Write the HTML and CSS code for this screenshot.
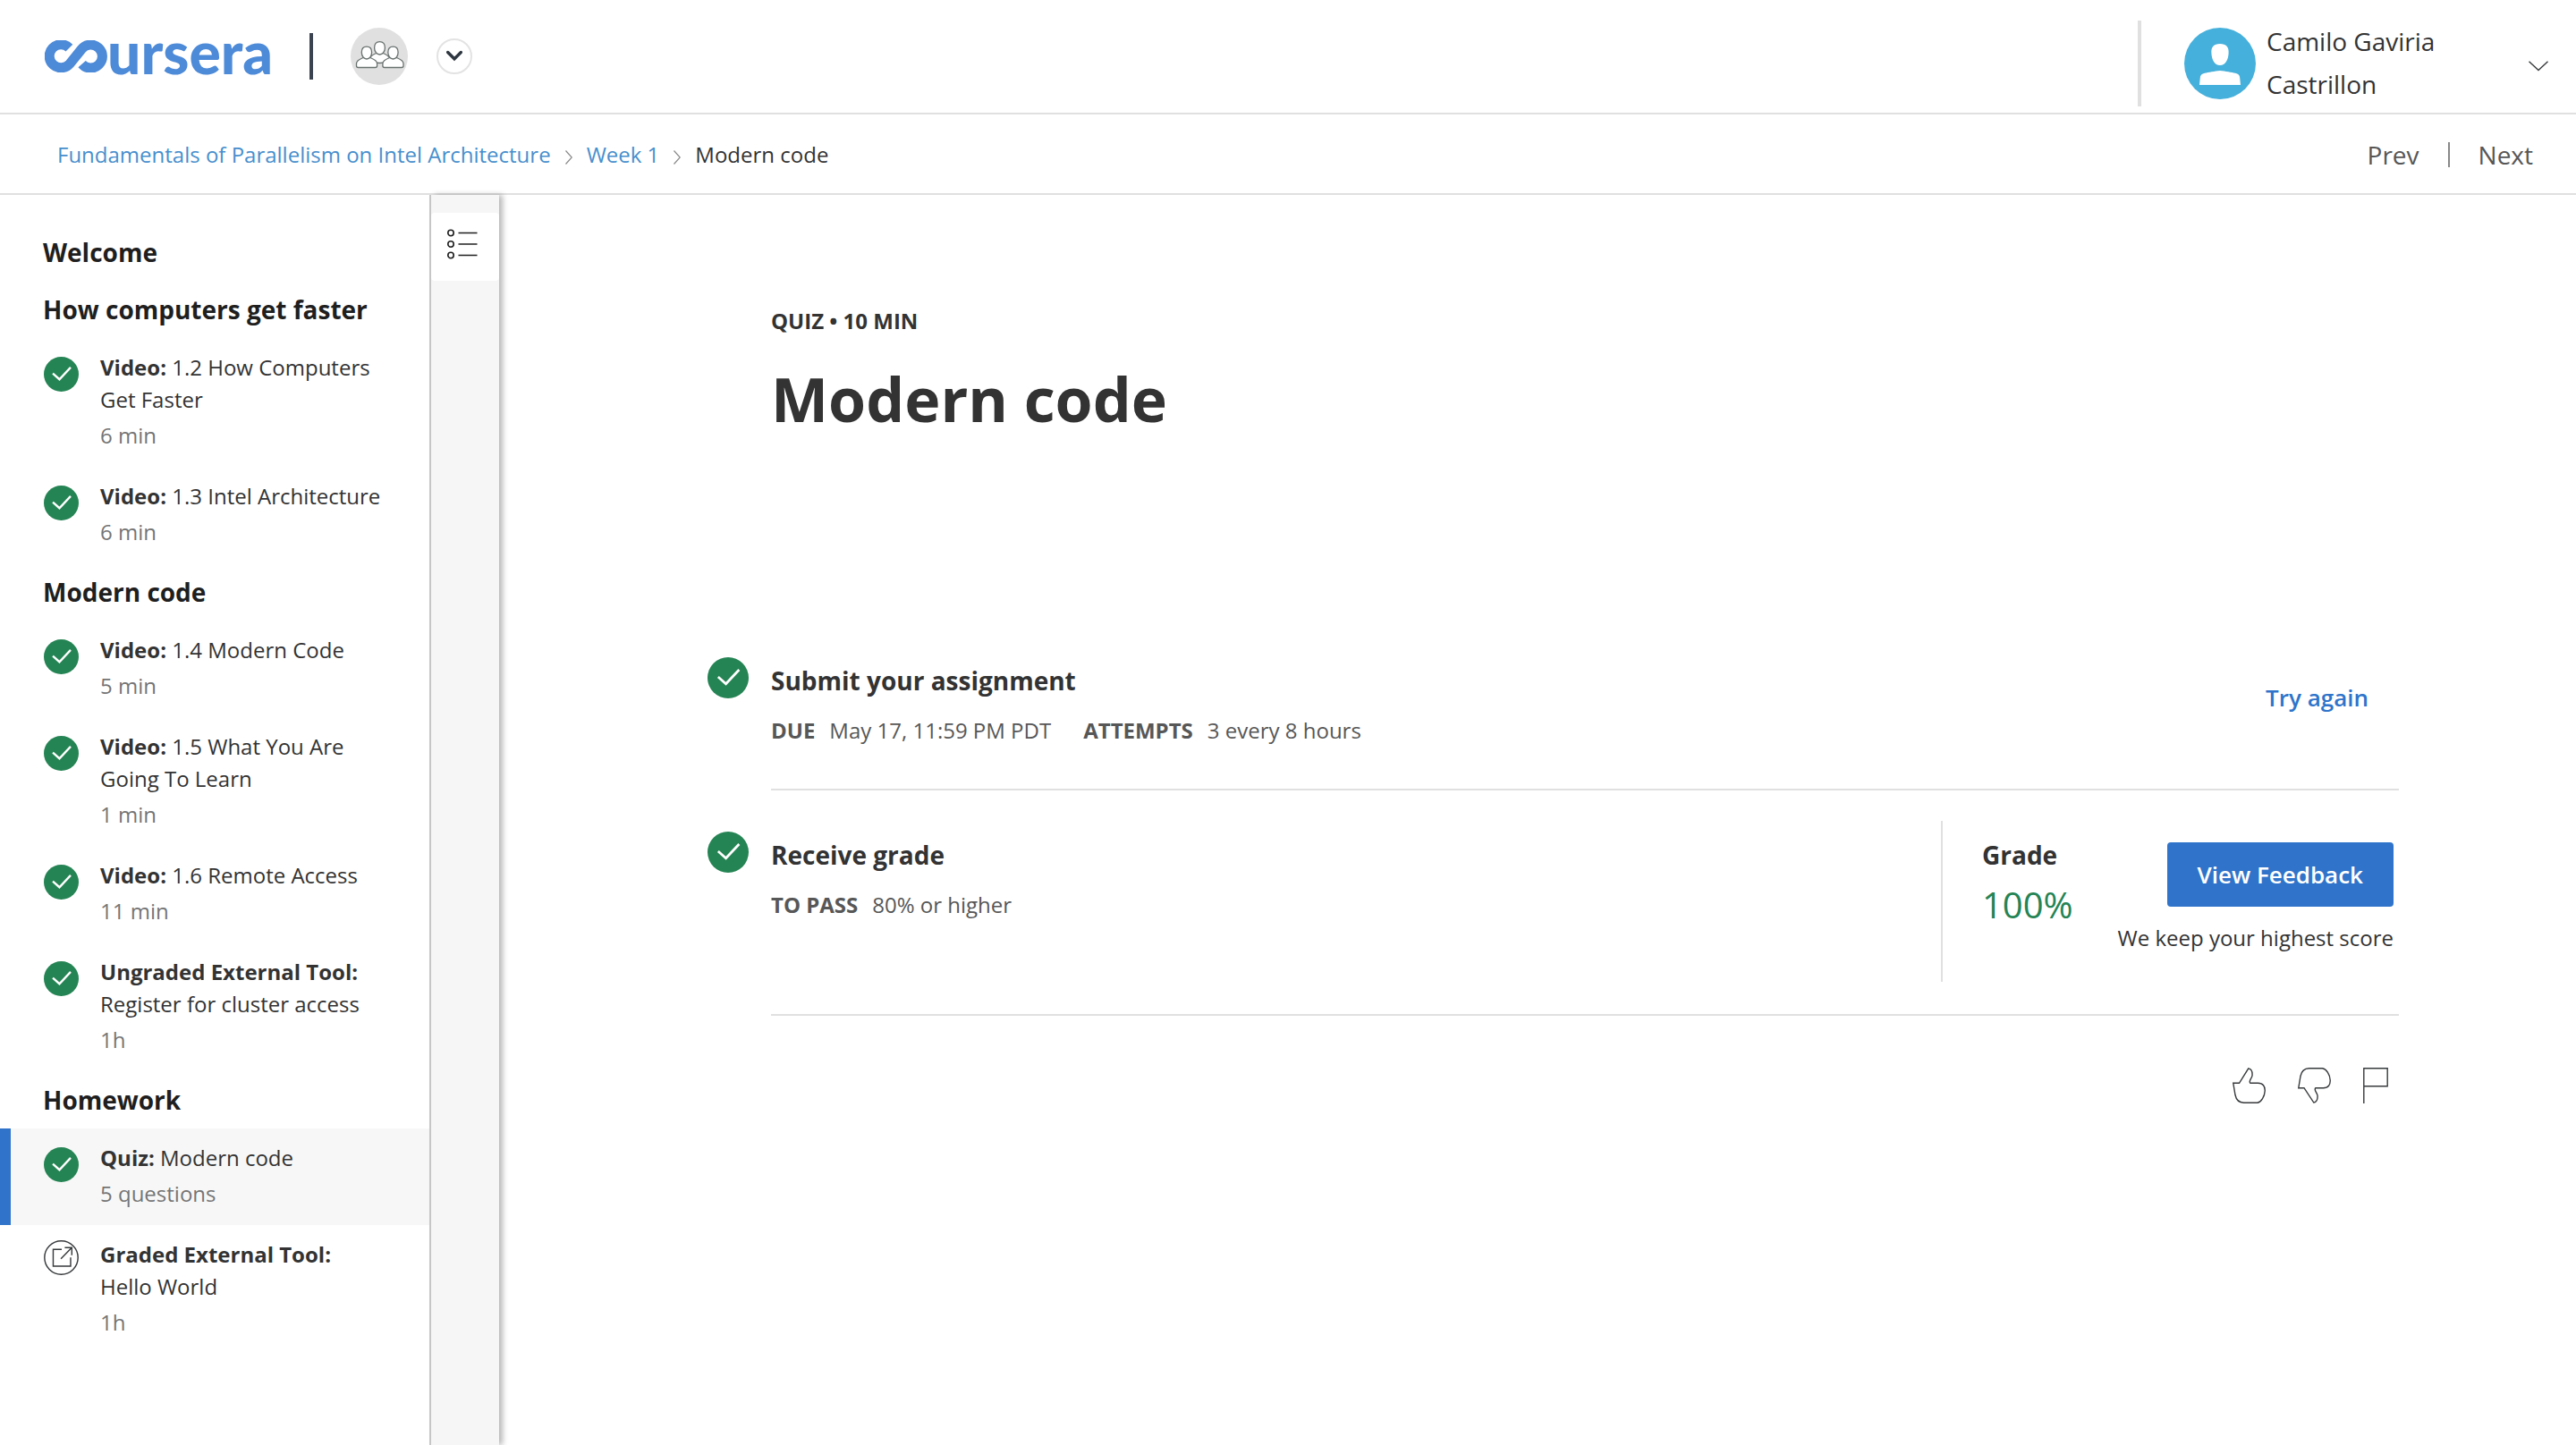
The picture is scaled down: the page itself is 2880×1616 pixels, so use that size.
FILE: index.html
```html
<!DOCTYPE html>
<html lang="en">
<head>
<meta charset="utf-8">
<meta name="viewport" content="width=device-width, initial-scale=1">
<title>Modern code | Coursera</title>
<link rel="stylesheet" href="styles.css">
</head>
<body>
<svg class="symbols" aria-hidden="true">
  <symbol id="icon-done" viewBox="0 0 38 38">
    <circle cx="19" cy="19" r="19" fill="#258454"/>
    <path d="M9.8 18.2 17 24.6 29.2 11.6" fill="none" stroke="#fff" stroke-width="2.3"/>
  </symbol>
  <symbol id="icon-external" viewBox="0 0 38 38">
    <g fill="none" stroke="#373a3c" stroke-width="1.4">
      <circle cx="19" cy="19" r="18.2"/>
      <path d="M19.5 9.9H10.2V28.2H29.2V18.8M18.6 20.2 30.4 8.1M22.8 8H30.5V16.2"/>
    </g>
  </symbol>
</svg>

<header class="top-bar">
  <a class="logo" href="#" aria-label="Coursera">
    <svg class="logo-mark" viewBox="0 0 70 36" aria-hidden="true">
      <path d="M27.4 8.6A13 13 0 1 0 28.1 26.2L41.4 9.8A13 13 0 1 1 41.6 26.6" fill="none" stroke="#4d8ad8" stroke-width="11"/>
    </svg>
    <span class="logo-text">ursera</span>
  </a>
  <span class="logo-divider"></span>
  <span class="group-badge">
    <svg viewBox="0 0 64 64" aria-hidden="true">
      <g fill="#fff" stroke="#68716f" stroke-width="1.3" stroke-linejoin="round">
        <path d="M28.5 28.5Q23.500 30.500 21.500 33.500Q25 39.500 32.500 39.500T43.500 33.500Q41.500 30.500 36.500 28.500Z"/>
        <path d="M32.500 15.600C28.500 15.600 26.600 18 26.600 22.500C26.600 27 29.500 30 32.500 30C35.500 30 38.400 27 38.400 22.500C38.400 18 36.500 15.600 32.500 15.600Z"/>
        <path d="M14 33.500Q6.500 36.500 6.500 40V42.500Q6.500 44.500 8.500 44.500H27.600Q29.600 44.500 29.600 42.500V40Q29.600 36.500 22 33.500Z"/>
        <path d="M18 21.100C14 21.100 12.300 23.300 12.300 27.500C12.300 32 15 35 18 35C21 35 23.600 32 23.600 27.500C23.600 23.300 22 21.100 18 21.100Z"/>
        <path d="M43.500 33.500Q35.900 36.500 35.900 40V42.500Q35.900 44.500 37.900 44.500H57Q59 44.500 59 42.500V40Q59 36.500 51.500 33.500Z"/>
        <path d="M47.500 21.100C43.500 21.100 41.800 23.300 41.800 27.500C41.800 32 44.500 35 47.500 35C50.500 35 53.100 32 53.100 27.500C53.100 23.300 51.500 21.100 47.500 21.100Z"/>
      </g>
    </svg>
  </span>
  <button class="switcher" type="button" aria-label="Switch program">
    <svg viewBox="0 0 16 12" aria-hidden="true"><path d="M1.500 2 8 8.500 14.500 2" fill="none" stroke="#2e3640" stroke-width="3" stroke-linecap="round"/></svg>
  </button>
  <button class="account" type="button">
    <svg class="avatar" viewBox="0 0 80 80" aria-hidden="true">
      <circle cx="40" cy="40" r="40" fill="#45b0db"/>
      <path d="M40 18C33 18 29.800 22 30.400 28.500C30.800 36 34 42 40 42S49.200 36 49.600 28.500C50.200 22 47 18 40 18Z" fill="#fff"/>
      <path d="M40 48C46 48.500 53 50 57 50.800C60.500 51.500 62 53 62.200 56L63 64H17L17.800 56C18 53 19.500 51.500 23 50.800C27 50 34 48.500 40 48Z" fill="#fff"/>
    </svg>
    <span class="account-name">Camilo Gaviria Castrillon</span>
    <svg class="account-chevron" viewBox="0 0 22 12" aria-hidden="true"><path d="M.500 .800 11 10.500 21.500 .800" fill="none" stroke="#373a3c" stroke-width="1.400"/></svg>
  </button>
</header>

<div class="sub-bar">
  <nav class="breadcrumbs" aria-label="Breadcrumb">
    <a href="#">Fundamentals of Parallelism on Intel Architecture</a>
    <svg class="crumb-arrow" viewBox="0 0 8 16" aria-hidden="true"><path d="M.500 .500 7.300 8 .500 15.500" fill="none" stroke="#888" stroke-width="1.200"/></svg>
    <a href="#">Week 1</a>
    <svg class="crumb-arrow" viewBox="0 0 8 16" aria-hidden="true"><path d="M.500 .500 7.300 8 .500 15.500" fill="none" stroke="#888" stroke-width="1.200"/></svg>
    <span>Modern code</span>
  </nav>
  <nav class="pager" aria-label="Item navigation">
    <a href="#">Prev</a>
    <span class="pager-divider"></span>
    <a href="#">Next</a>
  </nav>
</div>

<div class="page">
  <nav class="outline" aria-label="Lessons">
    <h2>Welcome</h2>
    <h2>How computers get faster</h2>
    <ul>
      <li><a class="item" href="#"><svg class="item-icon"><use href="#icon-done"/></svg><span class="item-text"><span><b>Video:</b> 1.2 How Computers Get Faster</span><span class="item-meta">6 min</span></span></a></li>
      <li><a class="item" href="#"><svg class="item-icon"><use href="#icon-done"/></svg><span class="item-text"><span><b>Video:</b> 1.3 Intel Architecture</span><span class="item-meta">6 min</span></span></a></li>
    </ul>
    <h2>Modern code</h2>
    <ul>
      <li><a class="item" href="#"><svg class="item-icon"><use href="#icon-done"/></svg><span class="item-text"><span><b>Video:</b> 1.4 Modern Code</span><span class="item-meta">5 min</span></span></a></li>
      <li><a class="item" href="#"><svg class="item-icon"><use href="#icon-done"/></svg><span class="item-text"><span><b>Video:</b> 1.5 What You Are Going To Learn</span><span class="item-meta">1 min</span></span></a></li>
      <li><a class="item" href="#"><svg class="item-icon"><use href="#icon-done"/></svg><span class="item-text"><span><b>Video:</b> 1.6 Remote Access</span><span class="item-meta">11 min</span></span></a></li>
      <li><a class="item" href="#"><svg class="item-icon"><use href="#icon-done"/></svg><span class="item-text"><span><b>Ungraded External Tool:</b> Register for cluster access</span><span class="item-meta">1h</span></span></a></li>
    </ul>
    <h2>Homework</h2>
    <ul>
      <li><a class="item item-current" href="#" aria-current="page"><svg class="item-icon"><use href="#icon-done"/></svg><span class="item-text"><span><b>Quiz:</b> Modern code</span><span class="item-meta">5 questions</span></span></a></li>
      <li><a class="item" href="#"><svg class="item-icon item-icon-open"><use href="#icon-external"/></svg><span class="item-text"><span><b>Graded External Tool:</b> Hello World</span><span class="item-meta">1h</span></span></a></li>
    </ul>
  </nav>

  <div class="rail">
    <button class="rail-button" type="button" aria-label="Toggle lesson list">
      <svg viewBox="0 0 34 34" aria-hidden="true">
        <g fill="none" stroke="#1f1f1f" stroke-width="1.600">
          <circle cx="4" cy="4.500" r="3.200"/><circle cx="4" cy="17" r="3.200"/><circle cx="4" cy="29.500" r="3.200"/>
          <path d="M12.500 4.500H33.500M12.500 17H33.500M12.500 29.500H33.500"/>
        </g>
      </svg>
    </button>
  </div>

  <main class="content">
    <p class="kicker">QUIZ • 10 MIN</p>
    <h1>Modern code</h1>

    <section class="step">
      <svg class="step-icon"><use href="#icon-done"/></svg>
      <div class="step-row">
        <div class="step-body">
          <h3>Submit your assignment</h3>
          <dl class="facts">
            <div><dt>DUE</dt><dd>May 17, 11:59 PM PDT</dd></div>
            <div><dt>ATTEMPTS</dt><dd>3 every 8 hours</dd></div>
          </dl>
        </div>
        <button class="button button-plain" type="button">Try again</button>
      </div>
    </section>

    <section class="step">
      <svg class="step-icon"><use href="#icon-done"/></svg>
      <div class="step-row">
        <div class="step-body">
          <h3>Receive grade</h3>
          <dl class="facts">
            <div><dt>TO PASS</dt><dd>80% or higher</dd></div>
          </dl>
        </div>
        <div class="grade-panel">
          <div class="grade">
            <h3>Grade</h3>
            <p class="grade-value">100%</p>
          </div>
          <div class="grade-actions">
            <button class="button button-primary" type="button">View Feedback</button>
            <p>We keep your highest score</p>
          </div>
        </div>
      </div>
    </section>

    <div class="reactions">
      <button type="button" aria-label="Like">
        <svg viewBox="0 0 37 40" width="37" height="40"><path d="M.800 17.300H7.500L17.800 .900C21 1.500 22.400 4.500 22 9C21.700 12 17.500 15 19.800 17.300H28.500C34 17.300 36.500 21 36.200 26C36 32 32 38.500 28 39.200H12.500C7 39 4 35.500 3 30.500Z" fill="none" stroke="#373a3c" stroke-width="1.400"/></svg>
      </button>
      <button type="button" aria-label="Dislike">
        <svg viewBox="0 0 37 40" width="37" height="40"><path d="M.800 22.700H7L17.800 39.100C21 38.500 22.400 35.500 22 31C21.700 28 17.500 25 19.800 22.700H28.500C34 22.700 36.500 19 36.200 14C36 8 32 1.500 27.500 .800H12.500C7 1 4 4.500 3 9.500Z" fill="none" stroke="#373a3c" stroke-width="1.400"/></svg>
      </button>
      <button type="button" aria-label="Report a problem">
        <svg viewBox="0 0 28 40" width="28" height="40"><path d="M.800 40V.800H27.200V20.700H.800" fill="none" stroke="#373a3c" stroke-width="1.400"/></svg>
      </button>
    </div>
  </main>
</div>
</body>
</html>
```
FILE: styles.css
```css
* { box-sizing: border-box; margin: 0; padding: 0; }

body {
  display: flex;
  flex-direction: column;
  min-height: 100vh;
  background: #fff;
  color: #333;
  font-family: "Open Sans", "Noto Sans", sans-serif;
  font-size: 24px;
  line-height: 36px;
}

svg { display: block; }
a { color: inherit; text-decoration: none; }
ul { list-style: none; }
button { border: 0; background: none; color: inherit; font: inherit; cursor: pointer; }
.symbols { display: none; }

/* Top bar */
.top-bar {
  display: flex;
  align-items: center;
  border-bottom: 2px solid #e0e0e0;
  padding: 0 31px 0 50px;
}
.logo { display: flex; align-items: center; width: 256px; color: #4d8ad8; }
.logo-mark { width: 70px; height: 36px; flex: none; }
.logo-text {
  font-family: Lato, "Open Sans", sans-serif;
  font-size: 66px;
  font-weight: 900;
  line-height: 64px;
  padding-bottom: 10px;
}
.logo-divider { width: 4px; height: 52px; margin-left: 40px; background: #3c4350; }
.group-badge { width: 64px; height: 64px; margin-left: 42px; border-radius: 50%; background: #e0e0e0; }
.switcher {
  display: grid;
  place-items: center;
  width: 40px;
  height: 40px;
  margin-left: 32px;
  border: 2px solid #e3e3e3;
  border-radius: 50%;
}
.switcher svg { width: 18px; height: 14px; }
.account {
  display: flex;
  align-items: center;
  width: 459px;
  height: 96px;
  margin: 23px 0 7px auto;
  border-left: 4px solid #e0e0e0;
  padding-left: 48px;
  text-align: left;
}
.avatar { width: 80px; height: 80px; flex: none; }
.account-name { width: 240px; margin-left: 12px; padding-bottom: 2px; font-size: 28px; line-height: 48px; }
.account-chevron { width: 22px; height: 12px; margin: 6px 0 0 auto; }

/* Breadcrumb bar */
.sub-bar {
  display: flex;
  align-items: center;
  justify-content: space-between;
  min-height: 90px;
  border-bottom: 2px solid #e0e0e0;
  padding: 2px 48px 0 64px;
}
.breadcrumbs { display: flex; align-items: center; gap: 16px; }
.breadcrumbs a { color: #488fcd; }
.crumb-arrow { width: 8px; height: 16px; margin-top: 6px; }
.pager { display: flex; align-items: center; gap: 32px; color: #575757; font-size: 28px; }
.pager-divider { width: 2px; height: 28px; background: #888; }

/* Lesson outline */
.page { display: flex; flex: 1; }
.outline { flex: none; width: 482px; border-right: 2px solid #c9c9c9; padding: 32px 0; }
.outline h2 { padding-left: 48px; color: #1f1f1f; font-size: 28px; line-height: 64px; }
.item {
  display: flex;
  align-items: flex-start;
  gap: 24px;
  border-left: 12px solid transparent;
  padding: 15px 48px 17px 37px;
}
.item-current { border-left-color: #2f74ca; background: #f7f7f7; }
.item-icon { flex: none; width: 39px; height: 39px; margin-top: 6px; }
.item-icon-open { margin-top: 2px; }
.item-text { display: flex; flex-direction: column; gap: 4px; }
.item-meta { color: #757575; }

/* Rail beside the outline */
.rail {
  flex: none;
  width: 76px;
  padding-top: 20px;
  background: #f6f6f6;
  box-shadow: 4px 0 6px rgba(0, 0, 0, .28);
}
.rail-button {
  display: block;
  width: 100%;
  height: 76px;
  border-radius: 4px;
  padding: 0 24px 6px 18px;
  background: #fff;
}
.rail-button svg { width: 34px; height: 34px; }

/* Assignment */
.content { flex: 1; padding: 123px 198px 48px 233px; }
.kicker { padding-left: 71px; font-weight: 700; }
h1 { margin: 21px 0 195px; padding-left: 71px; font-size: 68px; line-height: 96px; }
h3 { font-size: 28px; line-height: 40px; }

.step { display: flex; align-items: flex-start; }
.step-icon { flex: none; width: 46px; height: 46px; margin: 46px 25px 0 0; }
.step-row {
  display: flex;
  flex: 1;
  align-items: flex-start;
  justify-content: space-between;
  border-bottom: 2px solid #e0e0e0;
  padding: 34px 0 36px;
}
.step-body { padding: 18px 0 11px; }
.facts { display: flex; gap: 36px; margin-top: 18px; color: #575757; }
.facts div { display: flex; gap: 16px; }
.facts dt { font-weight: 700; }

.button { border-radius: 4px; font-size: 26px; font-weight: 600; line-height: 36px; padding: 18px 34px; }
.button-plain { margin-top: 21px; color: #2f74ca; }
.button-primary { background: #2f74ca; color: #fff; }

.grade-panel {
  display: flex;
  justify-content: space-between;
  width: 512px;
  min-height: 180px;
  border-left: 2px solid #e0e0e0;
  padding: 18px 6px 18px 44px;
}
.grade-value { margin-top: 8px; color: #258454; font-size: 40px; line-height: 56px; }
.grade-actions { padding-top: 6px; text-align: right; }
.grade-actions p { margin-top: 17px; }

.reactions { display: flex; justify-content: flex-end; gap: 36px; padding: 58px 12px 0 0; }
```
